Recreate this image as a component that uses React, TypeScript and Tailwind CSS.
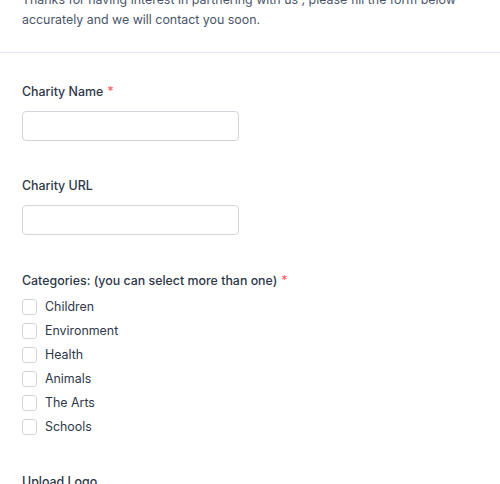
import React from 'react';

const categories = ['Children', 'Environment', 'Health', 'Animals', 'The Arts', 'Schools'];

const Label: React.FC<{ text: string; required?: boolean }> = ({ text, required }) => (
  <label className="block text-[12.4px] leading-5 font-medium text-[#2d3748]">
    {text}
    {required && <span className="ml-1 text-[#f56565]">*</span>}
  </label>
);

const App: React.FC = () => {
  return (
    <div className="w-[500px] h-[484px] overflow-hidden bg-white font-['Inter',sans-serif]">
      {/* Intro */}
      <div className="-mt-[10px] pb-[22px] px-[22px] border-b border-[#e2e8f0]">
        <p className="text-[12.4px] leading-5 text-[#4a5568]">
          Thanks for having interest in partnering with us , please fill the form below accurately and we will contact you soon.
        </p>
      </div>

      {/* Form */}
      <form className="px-[22px] pt-[29px]">
        <div className="mb-[35px]">
          <Label text="Charity Name" required />
          <input
            type="text"
            className="mt-[9px] block w-[217px] h-[30px] rounded border border-[#d2d6dc] bg-white px-2 text-[13px] outline-none"
          />
        </div>

        <div className="mb-[36px]">
          <Label text="Charity URL" />
          <input
            type="text"
            className="mt-[9px] block w-[217px] h-[30px] rounded border border-[#d2d6dc] bg-white px-2 text-[13px] outline-none"
          />
        </div>

        <div className="mb-[33px]">
          <Label text="Categories: (you can select more than one)" required />
          <div className="mt-1">
            {categories.map((c) => (
              <label key={c} className="flex items-center h-6 gap-[8px] text-[12.4px] text-[#2d3748]">
                <span className="w-[15px] h-[16px] rounded-[3px] border border-[#d2d6dc] bg-white" />
                {c}
              </label>
            ))}
          </div>
        </div>

        <Label text="Upload Logo" />
      </form>
    </div>
  );
};

export default App;
